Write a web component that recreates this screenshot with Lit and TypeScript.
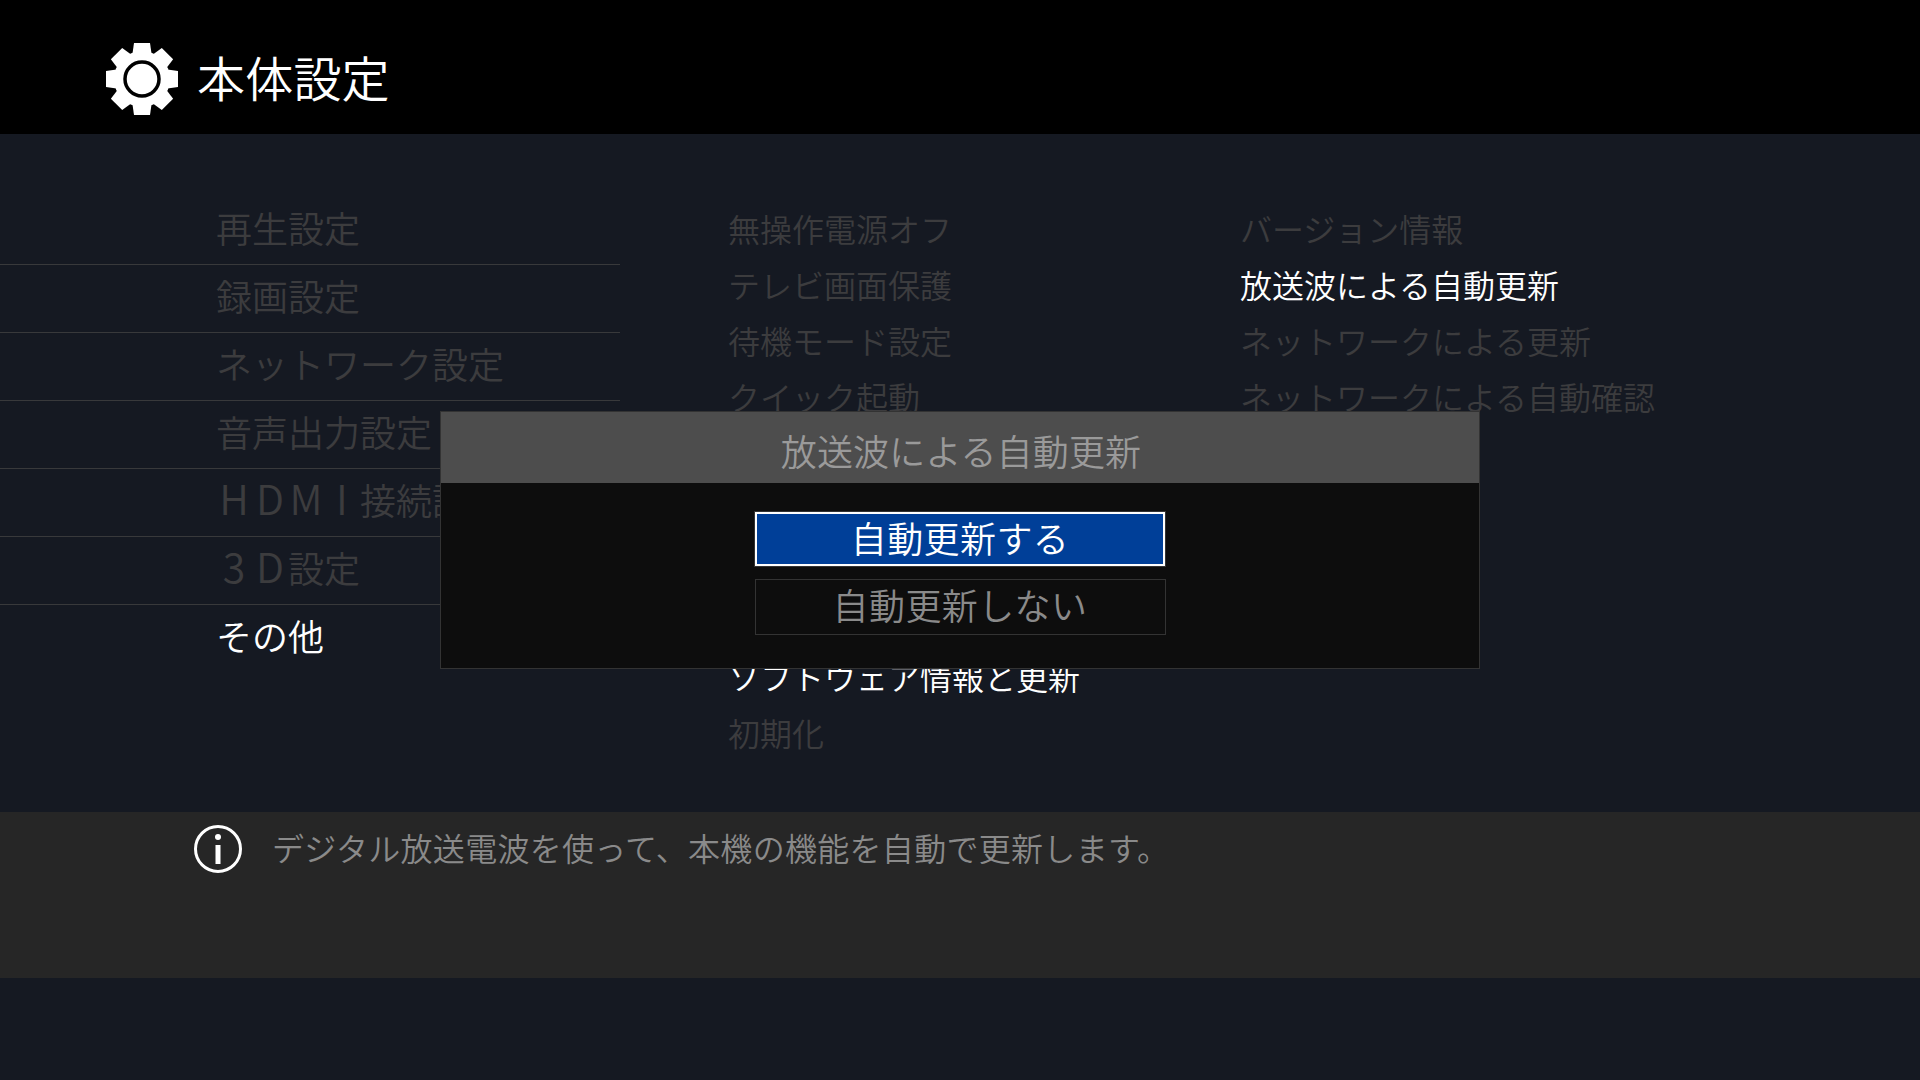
import { LitElement, html, svg, css } from 'lit';
import { customElement } from 'lit/decorators.js';

const MENU = ['再生設定', '録画設定', 'ネットワーク設定', '音声出力設定', 'HDMI接続設定', '3D設定', 'その他'];
// rows 5-8 of the middle column are fully covered by the dialog
const MIDDLE = ['無操作電源オフ', 'テレビ画面保護', '待機モード設定', 'クイック起動', '', '', '', '', 'ソフトウェア情報と更新', '初期化'];
const DETAIL = ['バージョン情報', '放送波による自動更新', 'ネットワークによる更新', 'ネットワークによる自動確認'];

// latin in the menu sits on the same 1em grid as the kanji, but drawn larger
const menuLabel = (m: string) =>
  m.split(/([A-Z0-9])/).map((part, i) => (i % 2 ? html`<span class="cell">${part}</span>` : part));

@customElement('app-root')
export class AppRoot extends LitElement {
  static styles = css`
    :host {
      display: block;
      position: relative;
      width: 1920px;
      height: 1080px;
      overflow: hidden;
      background: #151922;
      font-family: "Noto Sans CJK JP", "Noto Sans", sans-serif;
      font-weight: 350;
      color: #3c3c3e;
    }
    .header {
      height: 134px;
      background: #000;
      display: flex;
      align-items: center;
      padding: 24px 0 0 105px;
      gap: 18px;
      color: #fff;
      font-size: 48px;
      box-sizing: border-box;
    }
    .header span {
      padding-bottom: 7px;
      letter-spacing: 0.2px;
    }
    .main {
      display: grid;
      grid-template-columns: 620px 512px 1fr;
      padding-top: 63px;
      height: 678px;
      box-sizing: border-box;
    }
    .menu-row {
      height: 68px;
      line-height: 60px;
      padding-left: 216px;
      font-size: 36px;
      box-sizing: border-box;
      border-bottom: 1px solid #38393b;
    }
    .menu-row:last-child {
      border-bottom: none;
    }
    .cell {
      display: inline-block;
      width: 36px;
      font-size: 41px;
      line-height: 0;
      text-align: center;
    }
    .col {
      padding: 3px 0 0 108px;
      font-size: 32px;
    }
    .col-row {
      height: 56px;
      line-height: 56px;
      white-space: nowrap;
    }
    .on {
      color: #fff;
    }
    .info {
      height: 166px;
      background: #262626;
      display: flex;
      align-items: flex-start;
      padding: 12px 0 0 193px;
      gap: 29px;
      color: #8a8a8a;
      font-size: 32px;
      letter-spacing: 0.3px;
      line-height: 46px;
      box-sizing: border-box;
    }
    .info svg {
      flex: none;
      width: 50px;
      height: 50px;
    }
    .dialog {
      position: absolute;
      left: 440px;
      top: 411px;
      width: 1040px;
      height: 258px;
      box-sizing: border-box;
      background: #0d0d0d;
      border: 1px solid #333;
    }
    .dialog-title {
      height: 71px;
      line-height: 77px;
      padding-left: 2px;
      background: #4d4d4d;
      color: #9a9a9a;
      font-size: 36px;
      letter-spacing: 0.15px;
      text-align: center;
    }
    .options {
      display: flex;
      flex-direction: column;
      align-items: center;
      gap: 13px;
      padding-top: 29px;
    }
    .option {
      width: 411px;
      height: 56px;
      line-height: 48px;
      box-sizing: border-box;
      border: 1px solid #333;
      color: #8a8a8a;
      font-size: 36px;
      letter-spacing: 0.4px;
      text-align: center;
    }
    .option.selected {
      width: 410px;
      height: 54px;
      background: #003f98;
      border: 2px solid #fff;
      box-shadow: 0 0 0 1px #333;
      color: #fff;
      line-height: 46px;
    }
  `;

  render() {
    return html`
      <div class="header">
        <svg width="74" height="74" viewBox="-37 -37 74 74">
          <g fill="#fff">
            ${[0, 45, 90, 135, 180, 225, 270, 315].map(
              (a) => svg`<path d="M-10 -22 L-8 -36 H8 L10 -22 Z" transform="rotate(${a})"></path>`
            )}
            <circle r="28"></circle>
          </g>
          <circle r="17" fill="none" stroke="#000" stroke-width="3.5"></circle>
        </svg>
        <span>本体設定</span>
      </div>
      <div class="main">
        <div>
          ${MENU.map((m) => html`<div class="menu-row ${m === 'その他' ? 'on' : ''}">${menuLabel(m)}</div>`)}
        </div>
        <div class="col">
          ${MIDDLE.map((m) => html`<div class="col-row ${m.startsWith('ソフト') ? 'on' : ''}">${m}</div>`)}
        </div>
        <div class="col">
          ${DETAIL.map((m) => html`<div class="col-row ${m.startsWith('放送波') ? 'on' : ''}">${m}</div>`)}
        </div>
      </div>
      <div class="info">
        <svg viewBox="0 0 50 50">
          <circle cx="25" cy="25" r="22.5" fill="none" stroke="#fff" stroke-width="3"></circle>
          <circle cx="25" cy="13" r="3" fill="#fff"></circle>
          <rect x="22.5" y="21" width="5" height="19" fill="#fff"></rect>
        </svg>
        <span>デジタル放送電波を使って、本機の機能を自動で更新します。</span>
      </div>
      <div class="dialog">
        <div class="dialog-title">放送波による自動更新</div>
        <div class="options">
          <div class="option selected">自動更新する</div>
          <div class="option">自動更新しない</div>
        </div>
      </div>
    `;
  }
}
